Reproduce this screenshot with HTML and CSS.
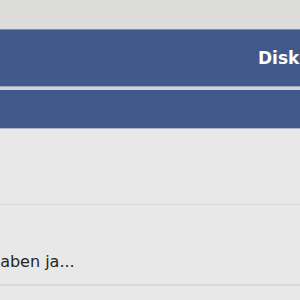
FILE: index.html
```html
<!DOCTYPE html>
<html>
<head>
<meta charset="utf-8">
<link rel="stylesheet" href="styles.css">
</head>
<body>
<div class="top"></div>
<div class="navbar"><span class="nav-title">Diskussion</span></div>
<div class="divider"></div>
<div class="subbar"></div>
<div class="content">
  <div class="row row-empty"></div>
  <div class="row row-text"><span class="snippet">haben ja...</span></div>
  <div class="row"></div>
</div>
</body>
</html>
```
FILE: styles.css
```css
html, body {
  margin: 0;
  padding: 0;
  background: #e7e8e7;
  font-family: "DejaVu Sans", Verdana, sans-serif;
  overflow: hidden;
}
.top {
  height: 29px;
  background: #dcdcdb;
}
.navbar {
  height: 57px;
  background: #40598a;
  border-top: 1px solid #7f8fb0;
  box-sizing: border-box;
  display: flex;
  align-items: center;
  padding-left: 258px;
  white-space: nowrap;
  overflow: hidden;
}
.nav-title {
  color: #fff;
  font-size: 17px;
  font-weight: bold;
}
.divider {
  height: 4px;
  background: #cfd3dc;
  border-top: 1px solid #9aa6c0;
  box-sizing: border-box;
}
.subbar {
  height: 38px;
  background: #40598a;
  border-bottom: 1px solid #a9b2c6;
}
.content {
  background: #e7e8e7;
}
.row {
  border-bottom: 1px solid #d8d9d8;
}
.row-empty {
  height: 75px;
}
.row-text {
  height: 79px;
  display: flex;
  align-items: center;
  white-space: nowrap;
}
.snippet {
  font-size: 16px;
  color: #262626;
  margin-left: -10px;
  margin-top: 34px;
}
```
